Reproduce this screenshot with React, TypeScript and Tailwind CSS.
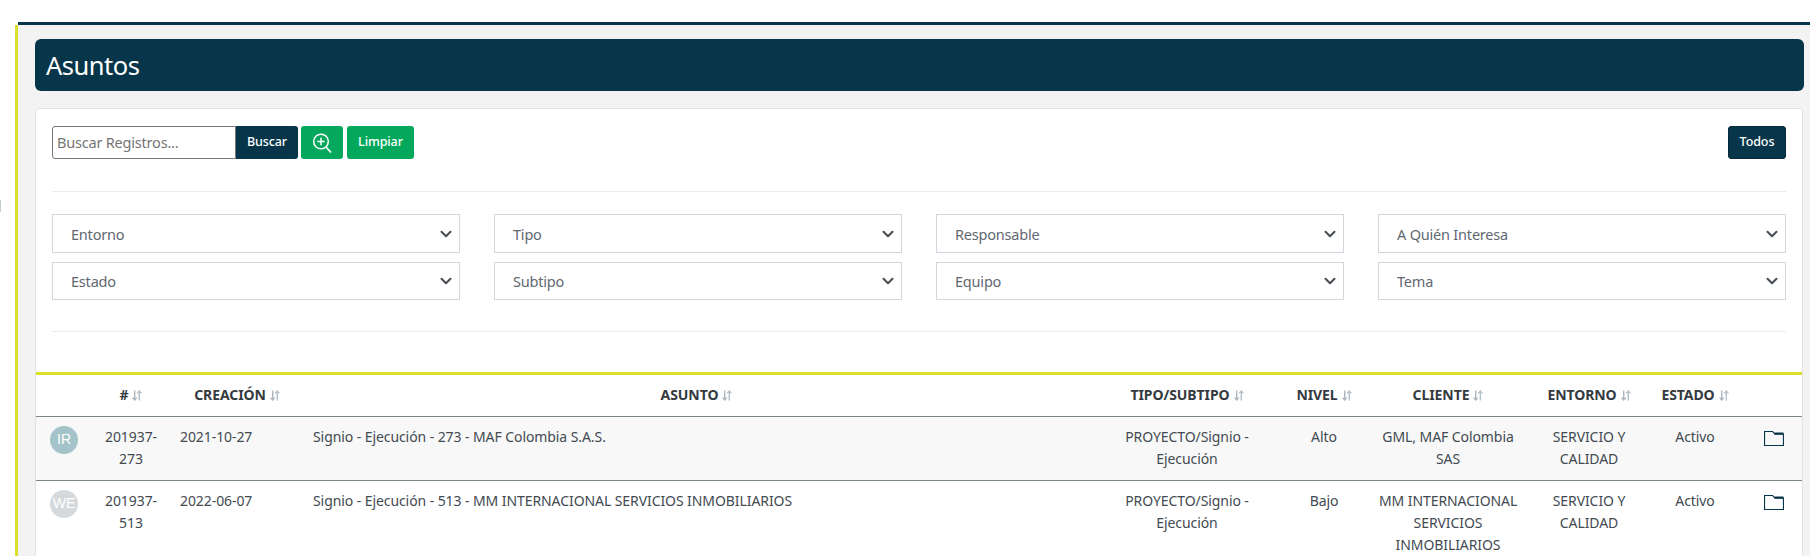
import React from "react";

const Sort = () => (
  <svg width="10" height="11" viewBox="0 0 10 11" className="inline-block ml-[4px] align-[-1px]" fill="none" stroke="#adb5bd" strokeWidth="1.4">
    <path d="M2.7 0.5V10M0.6 7.6L2.7 10L4.8 7.6" />
    <path d="M7.3 10.5V1M5.2 3.4L7.3 1L9.4 3.4" stroke="#b4c2cc" />
  </svg>
);

const Chevron = () => (
  <svg width="12" height="12" viewBox="0 0 16 16" fill="none" stroke="#4a4f55" strokeWidth="2.8" strokeLinecap="round" strokeLinejoin="round">
    <path d="M2 5l6 6 6-6" />
  </svg>
);

const Folder = () => (
  <svg width="20" height="15" viewBox="0 0 20 15" fill="none" stroke="#07364a" strokeWidth="1.1" className="ml-auto">
    <path d="M0.55 14.45V0.55H8.6L10.8 3H19.45V14.45Z" />
    <path d="M10.4 2.6H19.45" strokeWidth="2.2" />
  </svg>
);

const Select = ({ label, h }: { label: string; h: string }) => (
  <div className={`flex items-center justify-between border border-[#d5d5e0] bg-white pl-[18px] pr-[7px] text-[14.5px] tracking-[-0.2px] text-[#5f6871] ${h}`}>
    <span className="pt-px">{label}</span>
    <Chevron />
  </div>
);

const rows = [
  {
    ini: "IR", color: "bg-[#a3c4c9]", id: ["201937-", "273"], date: "2021-10-27",
    title: "Signio - Ejecución - 273 - MAF Colombia S.A.S.", nivel: "Alto",
    cliente: ["GML, MAF Colombia", "SAS"], bg: "bg-[#f8f8f8]",
  },
  {
    ini: "WE", color: "bg-[#d5d9dc]", id: ["201937-", "513"], date: "2022-06-07",
    title: "Signio - Ejecución - 513 - MM INTERNACIONAL SERVICIOS INMOBILIARIOS", nivel: "Bajo",
    cliente: ["MM INTERNACIONAL", "SERVICIOS", "INMOBILIARIOS"], bg: "bg-white",
  },
];

const Lines = ({ items }: { items: string[] }) => (
  <>
    {items.map((t) => (
      <div key={t} className="whitespace-nowrap">{t}</div>
    ))}
  </>
);

export default function App() {
  return (
    <div className="h-[556px] overflow-hidden bg-white pl-[15px] pt-[22px] relative font-['Noto_Sans','Open_Sans',sans-serif] text-[14px] tracking-[-0.08px] leading-[22.4px] text-[#424a52]">
      <div className="absolute left-0 top-[200px] h-[12px] w-[1px] bg-[#c3ced4]" />
      <div className="ml-[3px] h-[3px] bg-[#07364a]" />
      <div className="h-[531px] border-l-[3px] border-[#dde02a] bg-[#f3f3f3] pl-[17px] pr-[6px] pt-[14px]">
        <div className="flex h-[52px] items-center rounded-md bg-[#07364a] pl-[11px] text-[25.5px] tracking-[-0.5px] text-white">Asuntos</div>
        <div className="mr-px mt-[17px] rounded-t border border-[#e2e2e2] bg-white">
          <div className="px-[16px] pt-[17px]">
            <div className="flex h-[33px] items-stretch justify-between text-[12.5px] tracking-[-0.1px] font-medium text-white">
              <div className="flex">
                <div className="flex w-[184px] items-center rounded-l-[3px] border border-[#767676] bg-white pl-[4px] text-[14.5px] tracking-[-0.2px] font-normal text-[#757575]">Buscar Registros...</div>
                <button className="w-[62px] rounded-r-[3px] bg-[#07364a]">Buscar</button>
                <button className="ml-[3px] flex w-[42px] items-center justify-center rounded-[3px] bg-[#03a85c]">
                  <svg width="22" height="22" viewBox="0 0 22 22" fill="none" stroke="#fff" strokeWidth="1.5">
                    <circle cx="10" cy="9.5" r="7.3" />
                    <path d="M10 5.8V13.2M6.3 9.5H13.7" />
                    <path d="M15 15L20 20.5" strokeWidth="1.7" />
                  </svg>
                </button>
                <button className="ml-[4px] w-[67px] rounded-[3px] bg-[#03a85c]">Limpiar</button>
              </div>
              <button className="w-[58px] rounded-[3px] border border-[#04293a] bg-[#07364a]">Todos</button>
            </div>
            <div className="mt-[32px] h-px bg-[#eaeaea]" />
            <div className="mt-[22px] grid grid-cols-4 gap-x-[34px] gap-y-[9px]">
              {["Entorno", "Tipo", "Responsable", "A Quién Interesa"].map((l) => (
                <Select key={l} label={l} h="h-[39px]" />
              ))}
              {["Estado", "Subtipo", "Equipo", "Tema"].map((l) => (
                <Select key={l} label={l} h="h-[38px]" />
              ))}
            </div>
            <div className="mt-[31px] h-px bg-[#eaeaea]" />
          </div>
          <div className="mt-[40px] h-[3px] bg-[#dde02a]" />
          <table className="w-full table-fixed border-collapse">
            <colgroup>
              <col className="w-[56px]" />
              <col className="w-[78px]" />
              <col className="w-[134px]" />
              <col />
              <col className="w-[164px]" />
              <col className="w-[110px]" />
              <col className="w-[138px]" />
              <col className="w-[144px]" />
              <col className="w-[68px]" />
              <col className="w-[73px]" />
            </colgroup>
            <thead>
              <tr className="h-[41px] border-b border-[#7b858c] text-center text-[14px] font-bold text-[#343a40]">
                <th />
                <th>#<Sort /></th>
                <th>CREACIÓN<Sort /></th>
                <th className="pr-[16px]">ASUNTO<Sort /></th>
                <th>TIPO/SUBTIPO<Sort /></th>
                <th>NIVEL<Sort /></th>
                <th>CLIENTE<Sort /></th>
                <th>ENTORNO<Sort /></th>
                <th className="whitespace-nowrap">ESTADO<Sort /></th>
                <th />
              </tr>
            </thead>
            <tbody>
              {rows.map((r) => (
                <tr key={r.ini} className={`${r.bg} border-b border-[#7b858c] text-center align-top`}>
                  <td className="pl-[14px] pt-[9px]">
                    <div className={`flex h-[28px] w-[28px] items-center justify-center rounded-full font-['Liberation_Sans',sans-serif] text-[14px] text-white ${r.color}`}>{r.ini}</div>
                  </td>
                  <td className="py-[9.1px]"><Lines items={r.id} /></td>
                  <td className="py-[9.1px] pl-[10px] text-left">{r.date}</td>
                  <td className="py-[9.1px] pl-[9px] text-left">{r.title}</td>
                  <td className="py-[9.1px]"><Lines items={["PROYECTO/Signio -", "Ejecución"]} /></td>
                  <td className="py-[9.1px]">{r.nivel}</td>
                  <td className="py-[9.1px]"><Lines items={r.cliente} /></td>
                  <td className="py-[9.1px]"><Lines items={["SERVICIO Y", "CALIDAD"]} /></td>
                  <td className="py-[9.1px]">Activo</td>
                  <td className="pt-[14px] pr-[18px]"><Folder /></td>
                </tr>
              ))}
            </tbody>
          </table>
        </div>
      </div>
    </div>
  );
}
